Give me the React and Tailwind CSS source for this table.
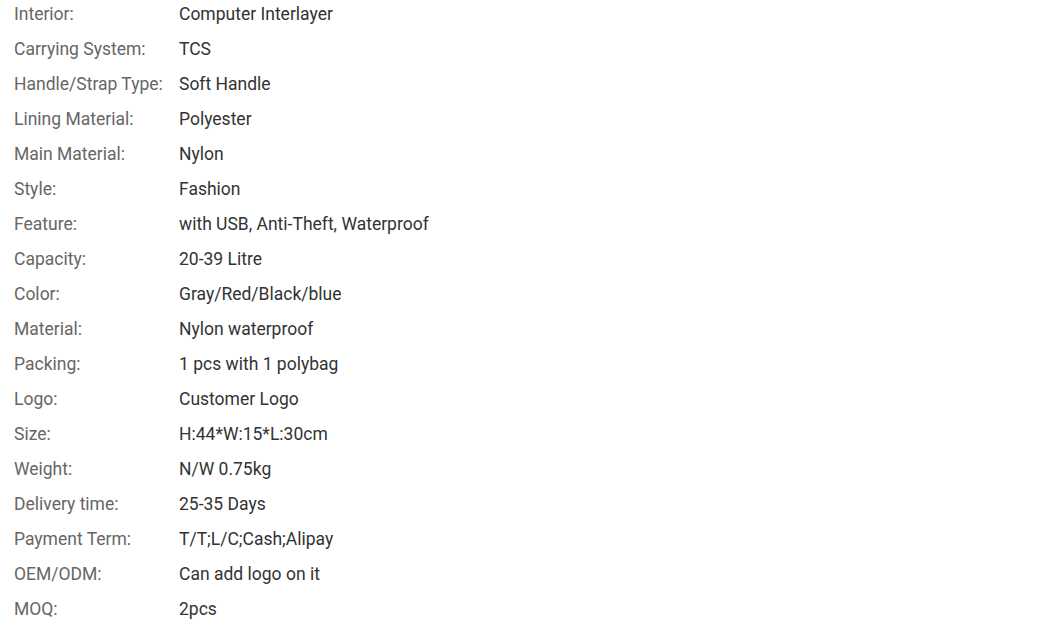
import React from 'react';

const specs = [
  ['Interior:', 'Computer Interlayer'],
  ['Carrying System:', 'TCS'],
  ['Handle/Strap Type:', 'Soft Handle'],
  ['Lining Material:', 'Polyester'],
  ['Main Material:', 'Nylon'],
  ['Style:', 'Fashion'],
  ['Feature:', 'with USB, Anti-Theft, Waterproof'],
  ['Capacity:', '20-39 Litre'],
  ['Color:', 'Gray/Red/Black/blue'],
  ['Material:', 'Nylon waterproof'],
  ['Packing:', '1 pcs with 1 polybag'],
  ['Logo:', 'Customer Logo'],
  ['Size:', 'H:44*W:15*L:30cm'],
  ['Weight:', 'N/W 0.75kg'],
  ['Delivery time:', '25-35 Days'],
  ['Payment Term:', 'T/T;L/C;Cash;Alipay'],
  ['OEM/ODM:', 'Can add logo on it'],
  ['MOQ:', '2pcs'],
];

export default function App() {
  return (
    <div className="min-h-screen bg-white font-['Roboto',sans-serif] text-[17.5px]">
      <div className="-mt-[3px] pl-[14px]">
        {specs.map(([label, value]) => (
          <div key={label} className="flex h-[35px] items-center">
            <div className="w-[165px] shrink-0 text-[#666666]">{label}</div>
            <div className="text-[#333333]">{value}</div>
          </div>
        ))}
      </div>
    </div>
  );
}
